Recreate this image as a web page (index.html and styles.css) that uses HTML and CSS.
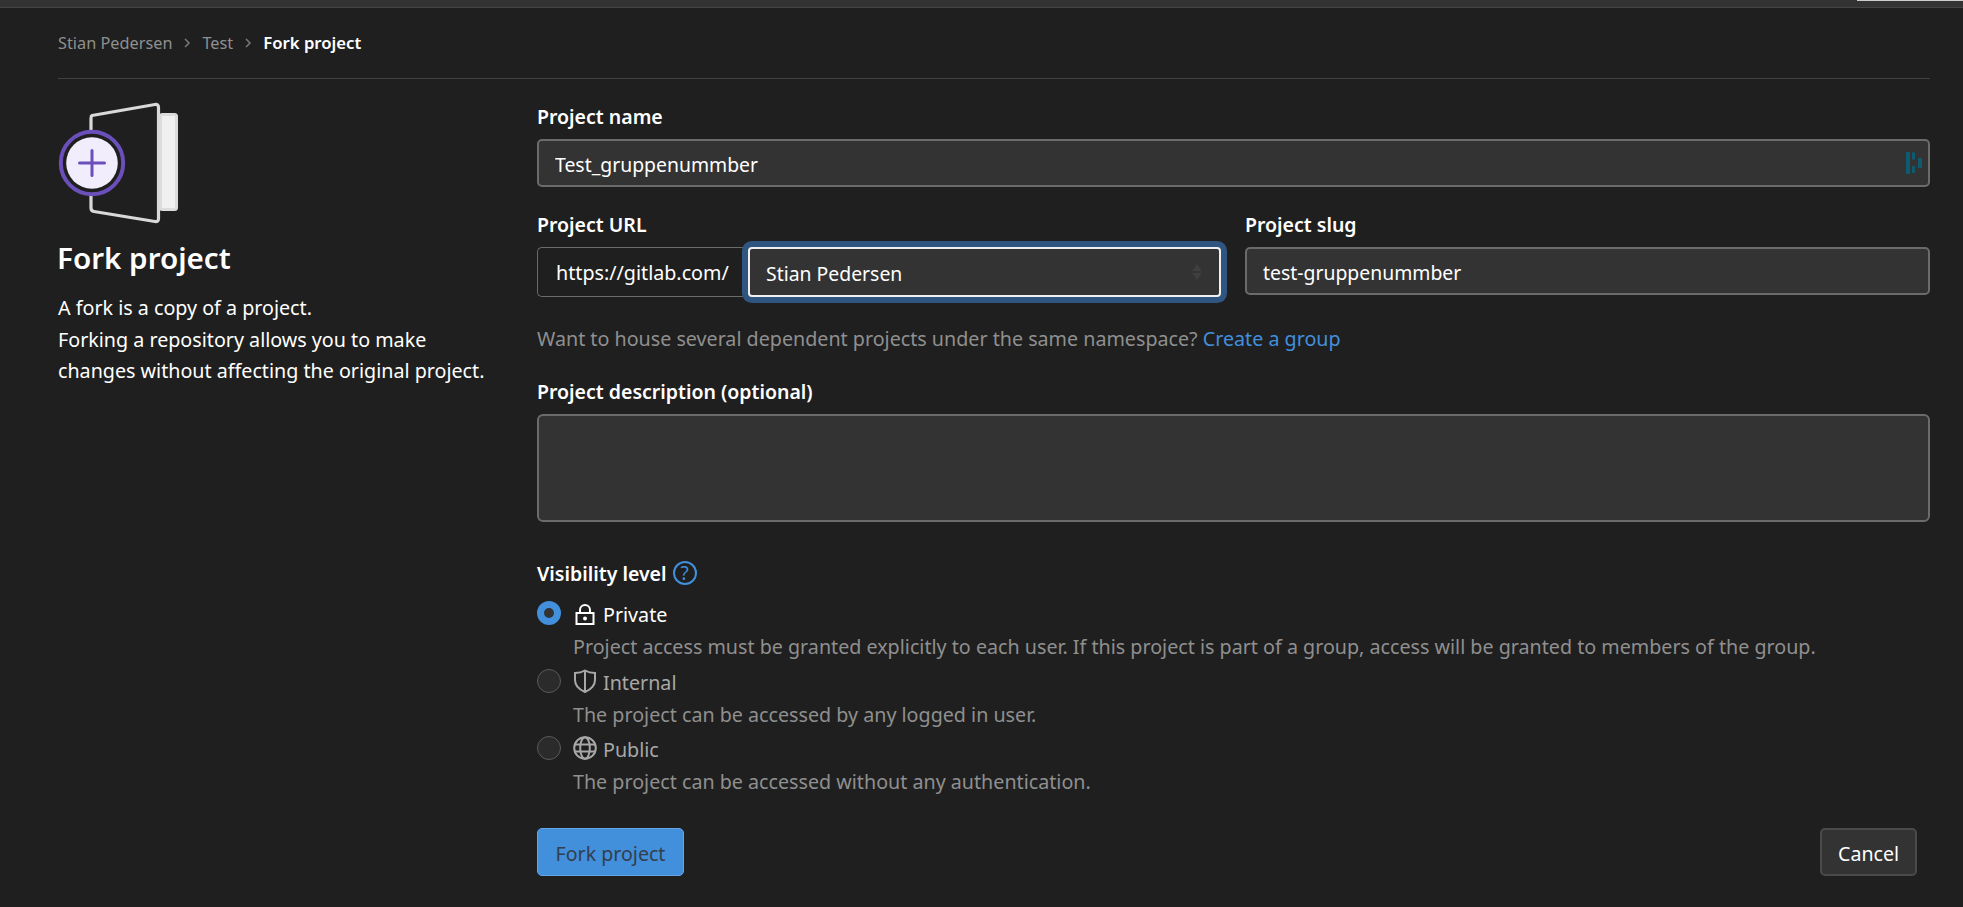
FILE: index.html
```html
<!DOCTYPE html>
<html lang="en">
<head>
    <meta charset="UTF-8">
    <meta name="viewport" content="width=device-width, initial-scale=1.0">
    <title>Fork project</title>
    <link rel="stylesheet" href="styles.css">
</head>
<body>

    <div class="top-bar"></div>

    <div class="page">
        <nav class="breadcrumb">
            <a href="#">Stian Pedersen</a>
            <svg class="crumb-sep" viewBox="0 0 16 16"><path d="M6 4l4 4-4 4"/></svg>
            <a href="#">Test</a>
            <svg class="crumb-sep" viewBox="0 0 16 16"><path d="M6 4l4 4-4 4"/></svg>
            <strong>Fork project</strong>
        </nav>

        <div class="layout">
            <aside class="intro">
                <svg class="fork-art" viewBox="0 0 122 124">
                    <rect x="102.500" y="13.500" width="16" height="95" rx="2" fill="#f0f0f0" stroke="#dcdcdc" stroke-width="3"/>
                    <path d="M34 14.500L97 3.500Q100.500 3 100.500 6.500V117.500Q100.500 121 97 120.500L36 110.500Q33 110 33 107V17.500Q33 15 34 14.500Z" fill="#1f1f1f" stroke="#d9d9d9" stroke-width="3.200"/>
                    <circle cx="34" cy="62" r="31.200" fill="#1f1f1f" stroke="#6b4fbb" stroke-width="4"/>
                    <circle cx="34" cy="62" r="25.800" fill="#f1edfd"/>
                    <path d="M21.500 62H46.500M34 49.500V74.500" stroke="#6b4fbb" stroke-width="3" stroke-linecap="round"/>
                </svg>
                <h1>Fork project</h1>
                <p>A fork is a copy of a project.<br>Forking a repository allows you to make changes without affecting the original project.</p>
            </aside>

            <form class="fork-form">
                <div class="name-group">
                    <label class="field-label" for="name">Project name</label>
                    <div class="name-wrap">
                        <input class="text-input" id="name" type="text" value="Test_gruppenummber">
                        <svg class="pw-icon" viewBox="0 0 16 22">
                            <rect x="0" y="0" width="4" height="22"/>
                            <rect x="6" y="0.500" width="3" height="7"/>
                            <rect x="6" y="14" width="3" height="7"/>
                            <rect x="12" y="6" width="4" height="10"/>
                        </svg>
                    </div>
                </div>

                <div class="url-row">
                    <div class="url-group">
                        <label class="field-label" for="namespace">Project URL</label>
                        <div class="url-field">
                            <span class="url-prefix">https://gitlab.com/</span>
                            <div class="select-wrap">
                                <select class="namespace-select" id="namespace">
                                    <option>Stian Pedersen</option>
                                </select>
                                <svg class="select-caret" viewBox="0 0 12 16"><path d="M6 0l5 7H1zM6 16L1 9h10z"/></svg>
                            </div>
                        </div>
                    </div>
                    <div class="slug-group">
                        <label class="field-label" for="slug">Project slug</label>
                        <input class="text-input" id="slug" type="text" value="test-gruppenummber">
                    </div>
                </div>

                <p class="help-text">Want to house several dependent projects under the same namespace? <a href="#">Create a group</a></p>

                <label class="field-label" for="description">Project description (optional)</label>
                <textarea class="text-area" id="description"></textarea>

                <div class="visibility-title">
                    <span class="field-label">Visibility level</span>
                    <span class="help-icon">?</span>
                </div>

                <div class="option">
                    <label class="option-head is-active">
                        <input type="radio" name="visibility" checked>
                        <svg class="option-icon" viewBox="0 0 24 24"><path d="M7 12V9a5 5 0 0 1 10 0v3M3.500 12h17v11h-17z"/><circle class="dot" cx="12" cy="17.500" r="2"/></svg>
                        <span class="option-name">Private</span>
                    </label>
                    <p>Project access must be granted explicitly to each user. If this project is part of a group, access will be granted to members of the group.</p>
                </div>
                <div class="option">
                    <label class="option-head">
                        <input type="radio" name="visibility">
                        <svg class="option-icon" viewBox="0 0 24 24"><path d="M12 1.500c3 1.800 6 2.500 10 2.500v7c0 5.500-4 9.500-10 12C6 20.500 2 16.500 2 11V4c4 0 7-.7 10-2.500zM12 2v20"/></svg>
                        <span class="option-name">Internal</span>
                    </label>
                    <p>The project can be accessed by any logged in user.</p>
                </div>
                <div class="option">
                    <label class="option-head">
                        <input type="radio" name="visibility">
                        <svg class="option-icon" viewBox="0 0 24 24"><circle cx="12" cy="12" r="10.800"/><ellipse cx="12" cy="12" rx="4.800" ry="10.800"/><path d="M2 8.500h20M2 15.500h20"/></svg>
                        <span class="option-name">Public</span>
                    </label>
                    <p>The project can be accessed without any authentication.</p>
                </div>

                <div class="actions">
                    <button type="submit" class="btn-fork">Fork project</button>
                    <button type="button" class="btn-cancel">Cancel</button>
                </div>
            </form>
        </div>
    </div>

</body>
</html>
```

FILE: styles.css
```css
body {
    font-family: 'Noto Sans', 'Open Sans', sans-serif;
    font-size: 19.700px;
    line-height: 24px;
    background-color: #1f1f1f;
    color: #ffffff;
    margin: 0;
    padding: 0;
}

a {
    color: #428fdc;
    text-decoration: none;
}

.top-bar {
    position: relative;
    height: 7px;
    background-color: #333333;
    border-bottom: 1px solid #444444;
}

.top-bar::after {
    content: "";
    position: absolute;
    top: 0;
    right: 0;
    width: 106px;
    height: 1px;
    background-color: #cccccc;
}

.page {
    padding: 0 33px 0 58px;
}

.breadcrumb {
    display: flex;
    align-items: center;
    height: 70px;
    border-bottom: 1px solid #404040;
    font-size: 16.300px;
}

.breadcrumb a {
    color: #8f8f8f;
}

.breadcrumb strong {
    font-size: 16.700px;
    font-weight: 600;
}

.crumb-sep {
    width: 16px;
    height: 16px;
    margin: 0 7px;
    fill: none;
    stroke: #7a7a7a;
    stroke-width: 1.500;
}

.layout {
    display: flex;
}

.intro {
    width: 479px;
    flex-shrink: 0;
    padding-top: 22px;
}

.fork-art {
    display: block;
    width: 122px;
    height: 124px;
}

.intro h1 {
    font-size: 29.600px;
    font-weight: 600;
    line-height: 40px;
    margin: 13px 0 14px -1px;
}

.intro p {
    width: 440px;
    margin: 0;
    font-size: 19.700px;
    line-height: 31.500px;
}

.fork-form {
    flex: 1;
    padding-top: 26px;
}

.field-label {
    display: block;
    font-size: 19.500px;
    font-weight: 600;
}

.name-group .field-label {
    margin-bottom: 10px;
}

.name-wrap {
    position: relative;
}

.text-input {
    display: block;
    width: 100%;
    height: 48px;
    box-sizing: border-box;
    padding: 2px 17px 0 16px;
    font-family: inherit;
    font-size: 19.400px;
    color: #ffffff;
    background-color: #333333;
    border: 2px solid #6b6b6b;
    border-radius: 5px;
}

.pw-icon {
    position: absolute;
    top: 13px;
    right: 8px;
    width: 16px;
    height: 22px;
    fill: #0e5a70;
}

.url-row {
    display: flex;
    gap: 24px;
    margin-top: 26px;
}

.url-group {
    width: 684px;
}

.url-group .field-label,
.slug-group .field-label {
    margin-bottom: 10px;
}

.slug-group {
    flex: 1;
}

.url-field {
    display: flex;
    height: 50px;
}

.url-prefix {
    width: 211px;
    box-sizing: border-box;
    line-height: 50px;
    padding-left: 18px;
    border: 1px solid #6b6b6b;
    border-right: none;
    border-radius: 5px 0 0 5px;
    white-space: nowrap;
}

.select-wrap {
    position: relative;
    flex: 1;
}

.namespace-select {
    display: block;
    width: 100%;
    height: 50px;
    box-sizing: border-box;
    padding: 2px 16px 0 16px;
    font-family: inherit;
    font-size: 19.400px;
    color: #ffffff;
    background-color: #333333;
    border: 2px solid #f0f0f0;
    border-radius: 4px;
    box-shadow: 0 0 0 6px #2f5580;
    appearance: none;
    outline: none;
}

.select-caret {
    position: absolute;
    top: 17px;
    right: 18px;
    width: 12px;
    height: 16px;
    fill: #3f3f3f;
}

.help-text {
    margin: 30px 0 0 0;
    color: #8f8f8f;
}

.help-text + .field-label {
    margin: 29px 0 10px 0;
}

.text-area {
    display: block;
    width: 100%;
    height: 108px;
    box-sizing: border-box;
    background-color: #333333;
    border: 2px solid #6b6b6b;
    border-radius: 6px;
    resize: none;
}

.visibility-title {
    display: flex;
    align-items: center;
    gap: 6px;
    margin: 39px 0 16px 0;
}

.visibility-title .field-label {
    padding-top: 1px;
    line-height: 23px;
}

.help-icon {
    width: 24px;
    height: 24px;
    box-sizing: border-box;
    border: 2px solid #428fdc;
    border-radius: 50%;
    color: #428fdc;
    font-size: 19px;
    line-height: 20px;
    text-align: center;
}

.option {
    margin-bottom: 9.500px;
}

.option p {
    margin: 10px 0 0 36px;
    color: #8f8f8f;
}

.option-head {
    display: flex;
    align-items: center;
    color: #a8a8a8;
}

.option-head.is-active {
    color: #ffffff;
}

.option-name {
    padding-top: 4px;
    line-height: 20px;
}

.option-head input {
    appearance: none;
    width: 24px;
    height: 24px;
    box-sizing: border-box;
    margin: 0 12px 0 0;
    background-color: #2b2b2b;
    border: 1px solid #5a5a5a;
    border-radius: 50%;
}

.option-head input:checked {
    background-color: #333333;
    border: 7px solid #428fdc;
}

.option-icon {
    width: 24px;
    height: 24px;
    margin-right: 6px;
    fill: none;
    stroke: currentColor;
    stroke-width: 2;
}

.option-icon .dot {
    fill: currentColor;
    stroke: none;
}

.actions {
    display: flex;
    justify-content: space-between;
    margin: 34px 13px 0 0;
}

.btn-fork,
.btn-cancel {
    height: 48px;
    padding-top: 3px;
    font-family: inherit;
    font-size: 19.600px;
    border-radius: 5px;
}

.btn-fork {
    width: 147px;
    color: #333f4d;
    background-color: #428fdc;
    border: 1px solid #63a6e9;
}

.btn-cancel {
    width: 97px;
    color: #ffffff;
    background-color: #333333;
    border: 2px solid #4a4a4a;
}
```
